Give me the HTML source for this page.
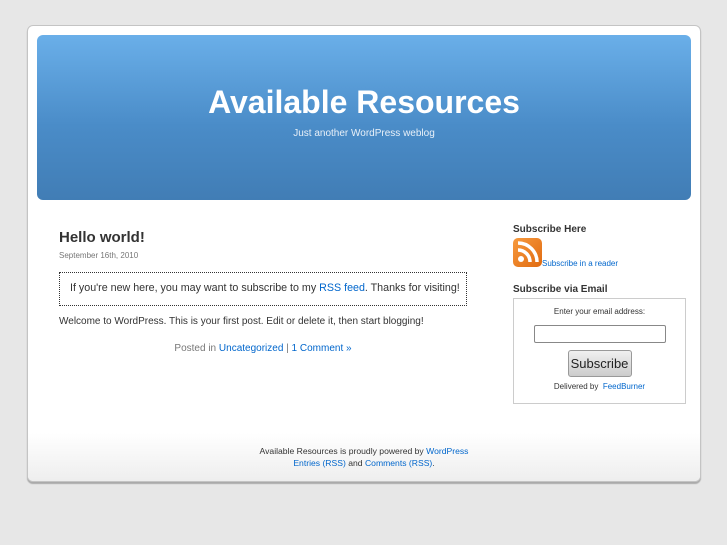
<!DOCTYPE html>
<html><head><meta charset="utf-8"><style>
*{margin:0;padding:0;box-sizing:border-box}
body{width:727px;height:545px;background:#e7e7e7;font-family:"Liberation Sans",sans-serif;color:#333;position:relative;overflow:hidden}
a{color:#0066cc;text-decoration:none}
#page{position:absolute;left:27px;top:25px;width:674px;height:457px;background:#fff;border:1px solid #c4c4c4;border-radius:6px;box-shadow:0 2px 1px #aaa;overflow:hidden}
#header{position:absolute;left:9px;top:9px;width:654px;height:165px;border-radius:6px;background:linear-gradient(#6aafe9,#4a8cc8 55%,#417db5);text-align:center;color:#fff}
#header h1{font-size:32px;font-weight:bold;margin-top:49px;letter-spacing:0}
#header p{font-size:10px;margin-top:7px;color:#e8f0f8}
.post{position:absolute;left:31px;top:203px;width:408px;font-size:10px}
.post h2{font-size:15px;font-weight:bold;color:#333}
.date{font-size:8px;color:#777;margin-top:5px}
.box{border:1px dotted #333;margin-top:12px;height:34px;padding:9px 0 0 10px;font-size:10.7px;white-space:nowrap}
.post p.t{margin-top:10px}
.meta{text-align:center;color:#777;margin-top:16px}
.side{position:absolute;left:485px;top:198px;width:173px;font-size:8px}
.side h3{font-size:10px;font-weight:bold;color:#333}
.fb{border:1px solid #ccc;margin-top:3px;height:106px;text-align:center;font-size:8px;padding-top:8px}
.inp{width:132px;height:18px;border:1px solid #888;border-radius:2px;margin:9px auto 0}
.btn{display:inline-block;margin-top:7px;width:64px;height:27px;border:1px solid #999;border-radius:3px;background:linear-gradient(#f0f0f0,#ccc);font-size:13px;line-height:25px;color:#222}
#footer{position:absolute;left:0;bottom:0;width:100%;height:48px;background:linear-gradient(#fff,#eee);text-align:center;font-size:8.6px;line-height:12px;padding-top:12px}
</style></head><body>
<div id="page">
<div id="header"><h1>Available Resources</h1><p>Just another WordPress weblog</p></div>
<div class="post">
<h2>Hello world!</h2>
<div class="date">September 16th, 2010</div>
<div class="box">If you're new here, you may want to subscribe to my <a>RSS feed</a>. Thanks for visiting!</div>
<p class="t">Welcome to WordPress. This is your first post. Edit or delete it, then start blogging!</p>
<p class="meta">Posted in <a>Uncategorized</a> | <a>1 Comment »</a></p>
</div>
<div class="side">
<h3>Subscribe Here</h3>
<div style="margin-top:3px;height:30px"><svg width="29" height="29" viewBox="0 0 29 29" style="float:left"><defs><linearGradient id="g" x1="0" y1="0" x2="1" y2="1"><stop offset="0" stop-color="#f79a3e"/><stop offset="1" stop-color="#e06a10"/></linearGradient></defs><rect width="29" height="29" rx="5" fill="url(#g)"/><circle cx="8" cy="21" r="3" fill="#fff"/><path d="M5 12a12 12 0 0 1 12 12" stroke="#fff" stroke-width="3.5" fill="none"/><path d="M5 5a19 19 0 0 1 19 19" stroke="#fff" stroke-width="3.5" fill="none"/></svg><a style="display:inline-block;margin-top:21px">Subscribe in a reader</a></div>
<h3 style="margin-top:16px">Subscribe via Email</h3>
<div class="fb">Enter your email address:<div class="inp"></div><div class="btn">Subscribe</div><div style="margin-top:5px">Delivered by &nbsp;<a>FeedBurner</a></div></div>
</div>
<div id="footer">Available Resources is proudly powered by <a>WordPress</a><br><a>Entries (RSS)</a> and <a>Comments (RSS)</a>.</div>
</div>
</body></html>
